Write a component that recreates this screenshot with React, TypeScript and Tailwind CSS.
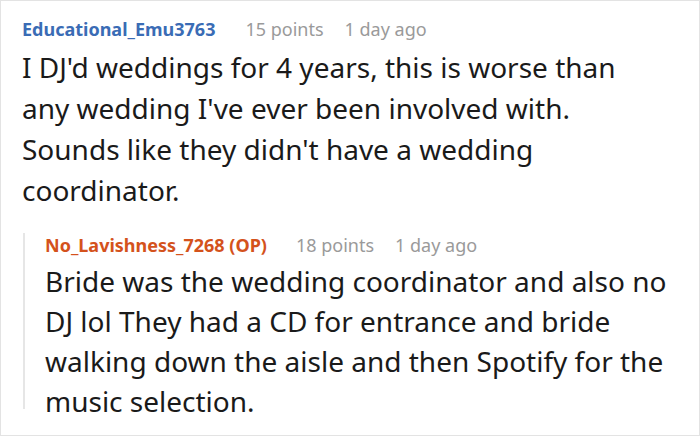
export default function App() {
  return (
    <div
      className="w-[700px] h-[436px] border border-[#e3e3e3] bg-white overflow-hidden"
      style={{ fontFamily: '"Noto Sans", "Open Sans", sans-serif' }}
    >
      <div className="pl-[21px] pt-[16px]">
        {/* Parent comment */}
        <div className="flex items-baseline text-[18px] leading-[24px]">
          <span className="font-bold text-[#3a6cb5]">Educational_Emu3763</span>
          <span className="ml-[30px] text-[#9a9a9a]">15 points</span>
          <span className="ml-[21px] text-[#9a9a9a]">1 day ago</span>
        </div>
        <p className="mt-[6px] text-[28px] leading-[41px] text-[#1a1a1a]">
          <span className="block whitespace-nowrap">I DJ'd weddings for 4 years, this is worse than</span>
          <span className="block whitespace-nowrap">any wedding I've ever been involved with.</span>
          <span className="block whitespace-nowrap">Sounds like they didn't have a wedding</span>
          <span className="block whitespace-nowrap">coordinator.</span>
        </p>

        {/* Reply */}
        <div className="mt-[32px] ml-[1px] border-l-2 border-[#e6e6e6] pl-[20px] h-[176px]">
          <div className="-mt-[10px] flex items-baseline text-[18px] leading-[24px]">
            <span className="font-bold text-[#d4521c]">No_Lavishness_7268 (OP)</span>
            <span className="ml-[29px] text-[#9a9a9a]">18 points</span>
            <span className="ml-[21px] text-[#9a9a9a]">1 day ago</span>
          </div>
          <p className="mt-[4px] text-[28px] leading-[40px] text-[#1a1a1a]">
            <span className="block whitespace-nowrap">Bride was the wedding coordinator and also no</span>
            <span className="block whitespace-nowrap">DJ lol They had a CD for entrance and bride</span>
            <span className="block whitespace-nowrap">walking down the aisle and then Spotify for the</span>
            <span className="block whitespace-nowrap">music selection.</span>
          </p>
        </div>
      </div>
    </div>
  )
}
